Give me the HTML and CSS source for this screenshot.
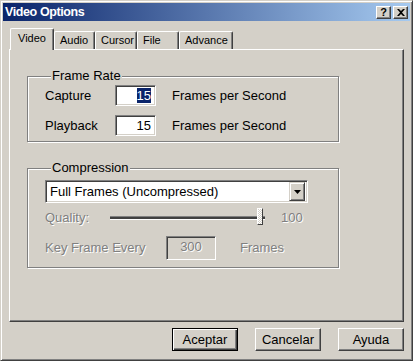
FILE: index.html
```html
<!DOCTYPE html>
<html lang="en">
<head>
    <meta charset="UTF-8">
    <title>Video Options</title>
    <link rel="stylesheet" href="styles.css">
</head>
<body>

    <div class="window">
        <!-- Title bar -->
        <div class="titlebar">
            <span class="title">Video Options</span>
            <div class="title-buttons">
                <span class="tbtn">?</span>
                <span class="tbtn">
                    <svg width="8" height="7" viewBox="0 0 8 7"><path d="M0 0h2l2 2 2-2h2L5 3.5 8 7H6L4 5 2 7H0l3-3.5z" fill="#000"/></svg>
                </span>
            </div>
        </div>

        <div class="content">
            <!-- Tabs -->
            <div class="tabs">
                <span class="tab tab-video active">Video</span>
                <span class="tab tab-audio">Audio</span>
                <span class="tab tab-cursor">Cursor</span>
                <span class="tab tab-file">File</span>
                <span class="tab tab-advance">Advance</span>
            </div>

            <div class="panel">
                <fieldset class="group group-rate">
                    <legend>Frame Rate</legend>
                    <div class="row">
                        <span class="label">Capture</span>
                        <span class="edit"><span class="selected">15</span></span>
                        <span class="unit">Frames per Second</span>
                    </div>
                    <div class="row">
                        <span class="label">Playback</span>
                        <span class="edit">15</span>
                        <span class="unit">Frames per Second</span>
                    </div>
                </fieldset>

                <fieldset class="group group-comp">
                    <legend>Compression</legend>
                    <div class="combo">
                        <span class="combo-text">Full Frames (Uncompressed)</span>
                        <span class="combo-arrow">
                            <svg width="7" height="4" viewBox="0 0 7 4"><path d="M0 0h7L3.5 4z" fill="#000"/></svg>
                        </span>
                    </div>
                    <div class="row row-quality">
                        <span class="label disabled">Quality:</span>
                        <div class="slider">
                            <span class="track"></span>
                            <span class="thumb"></span>
                        </div>
                        <span class="disabled value">100</span>
                    </div>
                    <div class="row row-key">
                        <span class="label disabled">Key Frame Every</span>
                        <span class="edit edit-disabled disabled">300</span>
                        <span class="unit disabled">Frames</span>
                    </div>
                </fieldset>
            </div>

            <!-- Dialog buttons -->
            <div class="actions">
                <button class="btn default">Aceptar</button>
                <button class="btn">Cancelar</button>
                <button class="btn">Ayuda</button>
            </div>
        </div>
    </div>

</body>
</html>
```

FILE: styles.css
```css
/* Base */
body {
    margin: 0;
    background: #D4D0C8;
    font-family: 'Liberation Sans', Arial, sans-serif;
    font-size: 13px;
    color: #000;
}

/* Window frame */
.window {
    width: 413px;
    height: 361px;
    box-sizing: border-box;
    background: #D4D0C8;
    border: 1px solid;
    border-color: #D4D0C8 #404040 #404040 #D4D0C8;
    box-shadow: inset 1px 1px 0 #fff, inset -1px -1px 0 #808080;
    padding: 2px;
}

.titlebar {
    height: 18px;
    display: flex;
    align-items: center;
    justify-content: space-between;
    background: linear-gradient(to right, #0A246A, #A6CAF0);
    padding: 0 2px 0 2px;
}

.title {
    color: #fff;
    font-weight: bold;
    font-size: 12.5px;
    letter-spacing: -0.4px;
}

.title-buttons {
    display: flex;
    gap: 2px;
}

.tbtn {
    width: 15px;
    height: 13px;
    box-sizing: border-box;
    background: #D4D0C8;
    border: 1px solid;
    border-color: #fff #404040 #404040 #fff;
    box-shadow: inset -1px -1px 0 #808080;
    display: flex;
    align-items: center;
    justify-content: center;
    font-weight: bold;
    font-size: 11px;
    line-height: 1;
}

.content {
    padding: 7px 6px 0 6px;
}

/* Tabs */
.tabs {
    display: flex;
    align-items: flex-end;
    height: 21px;
    padding-left: 1px;
    position: relative;
    z-index: 1;
    font-size: 11px;
}

.tab {
    height: 18px;
    box-sizing: border-box;
    border: 1px solid;
    border-color: #fff #404040 transparent #fff;
    border-bottom: none;
    box-shadow: inset -1px 0 0 #808080;
    border-radius: 2px 2px 0 0;
    padding: 1px 0 0 5px;
    line-height: 15px;
    white-space: nowrap;
    overflow: hidden;
}

.tab.active {
    height: 22px;
    margin-bottom: -1px;
    background: #D4D0C8;
    padding: 2px 0 0 7px;
}

.tab-video { width: 44px; }
.tab-audio { width: 41px; }
.tab-cursor { width: 42px; }
.tab-file { width: 42px; }
.tab-advance { width: 54px; }

.panel {
    height: 273px;
    box-sizing: border-box;
    border: 1px solid;
    border-color: #fff #404040 #404040 #fff;
    box-shadow: inset -1px -1px 0 #808080;
    padding: 19px 0 0 17px;
}

/* Group boxes */
.group {
    width: 312px;
    box-sizing: border-box;
    margin: 0;
    border: 1px solid #808080;
    box-shadow: inset 1px 1px 0 #fff, 1px 1px 0 #fff;
    padding: 3px 0 0 17px;
}

.group legend {
    padding: 0 1px;
    margin-left: 6px;
    background: #D4D0C8;
    line-height: 14px;
}

.group-rate {
    height: 73px;
    padding-top: 2px;
}

.group-comp {
    height: 107px;
    margin-top: 19px;
    padding-top: 5px;
}

.row {
    display: flex;
    align-items: center;
    height: 21px;
    margin-bottom: 9px;
}

.label {
    width: 70px;
}

.edit {
    width: 41px;
    height: 21px;
    box-sizing: border-box;
    background: #fff;
    border: 1px solid;
    border-color: #808080 #fff #fff #808080;
    box-shadow: inset 1px 1px 0 #404040, inset -1px -1px 0 #D4D0C8;
    text-align: right;
    padding: 0 4px;
    line-height: 19px;
    margin-right: 16px;
}

.selected {
    background: #0A246A;
    color: #fff;
}

/* Combo box */
.combo {
    width: 263px;
    height: 23px;
    box-sizing: border-box;
    background: #fff;
    border: 1px solid;
    border-color: #808080 #fff #fff #808080;
    box-shadow: inset 1px 1px 0 #404040, inset -1px -1px 0 #D4D0C8;
    display: flex;
    align-items: center;
    justify-content: space-between;
    padding: 2px;
    margin-bottom: 4px;
}

.combo-text {
    padding-left: 2px;
}

.combo-arrow {
    width: 16px;
    height: 19px;
    box-sizing: border-box;
    background: #D4D0C8;
    border: 1px solid;
    border-color: #D4D0C8 #404040 #404040 #D4D0C8;
    box-shadow: inset 1px 1px 0 #fff, inset -1px -1px 0 #808080;
    display: flex;
    align-items: center;
    justify-content: center;
}

/* Disabled text */
.disabled {
    color: #808080;
    text-shadow: 1px 1px 0 #fff;
}

.row-quality {
    height: 20px;
    margin-bottom: 10px;
}

.row-quality .label {
    width: 65px;
}

.slider {
    position: relative;
    width: 155px;
    height: 20px;
    margin-right: 16px;
}

.track {
    position: absolute;
    left: 0;
    right: 0;
    top: 9px;
    height: 4px;
    box-sizing: border-box;
    background: #404040;
    border-top: 1px solid #808080;
    border-bottom: 1px solid #fff;
}

.thumb {
    position: absolute;
    right: 2px;
    top: 1px;
    width: 6px;
    height: 17px;
    box-sizing: border-box;
    border: 1px solid;
    border-color: #fff #404040 #404040 #fff;
    background: repeating-conic-gradient(#fff 0 25%, #D4D0C8 0 50%) 0 0 / 2px 2px;
}

.row-key .label {
    width: 121px;
}

.edit-disabled {
    width: 50px;
    height: 24px;
    background: #D4D0C8;
    text-align: center;
    margin-right: 24px;
}

/* Dialog buttons */
.actions {
    display: flex;
    justify-content: flex-end;
    gap: 17px;
    margin-top: 6px;
}

.btn {
    width: 66px;
    height: 23px;
    font-family: inherit;
    font-size: 13px;
    background: #D4D0C8;
    border: 1px solid;
    border-color: #fff #404040 #404040 #fff;
    box-shadow: inset -1px -1px 0 #808080;
    padding: 0;
    color: #000;
}

.btn.default {
    border: 1px solid #000;
    box-shadow: inset 1px 1px 0 #fff, inset -1px -1px 0 #404040, inset -2px -2px 0 #808080;
}
```
